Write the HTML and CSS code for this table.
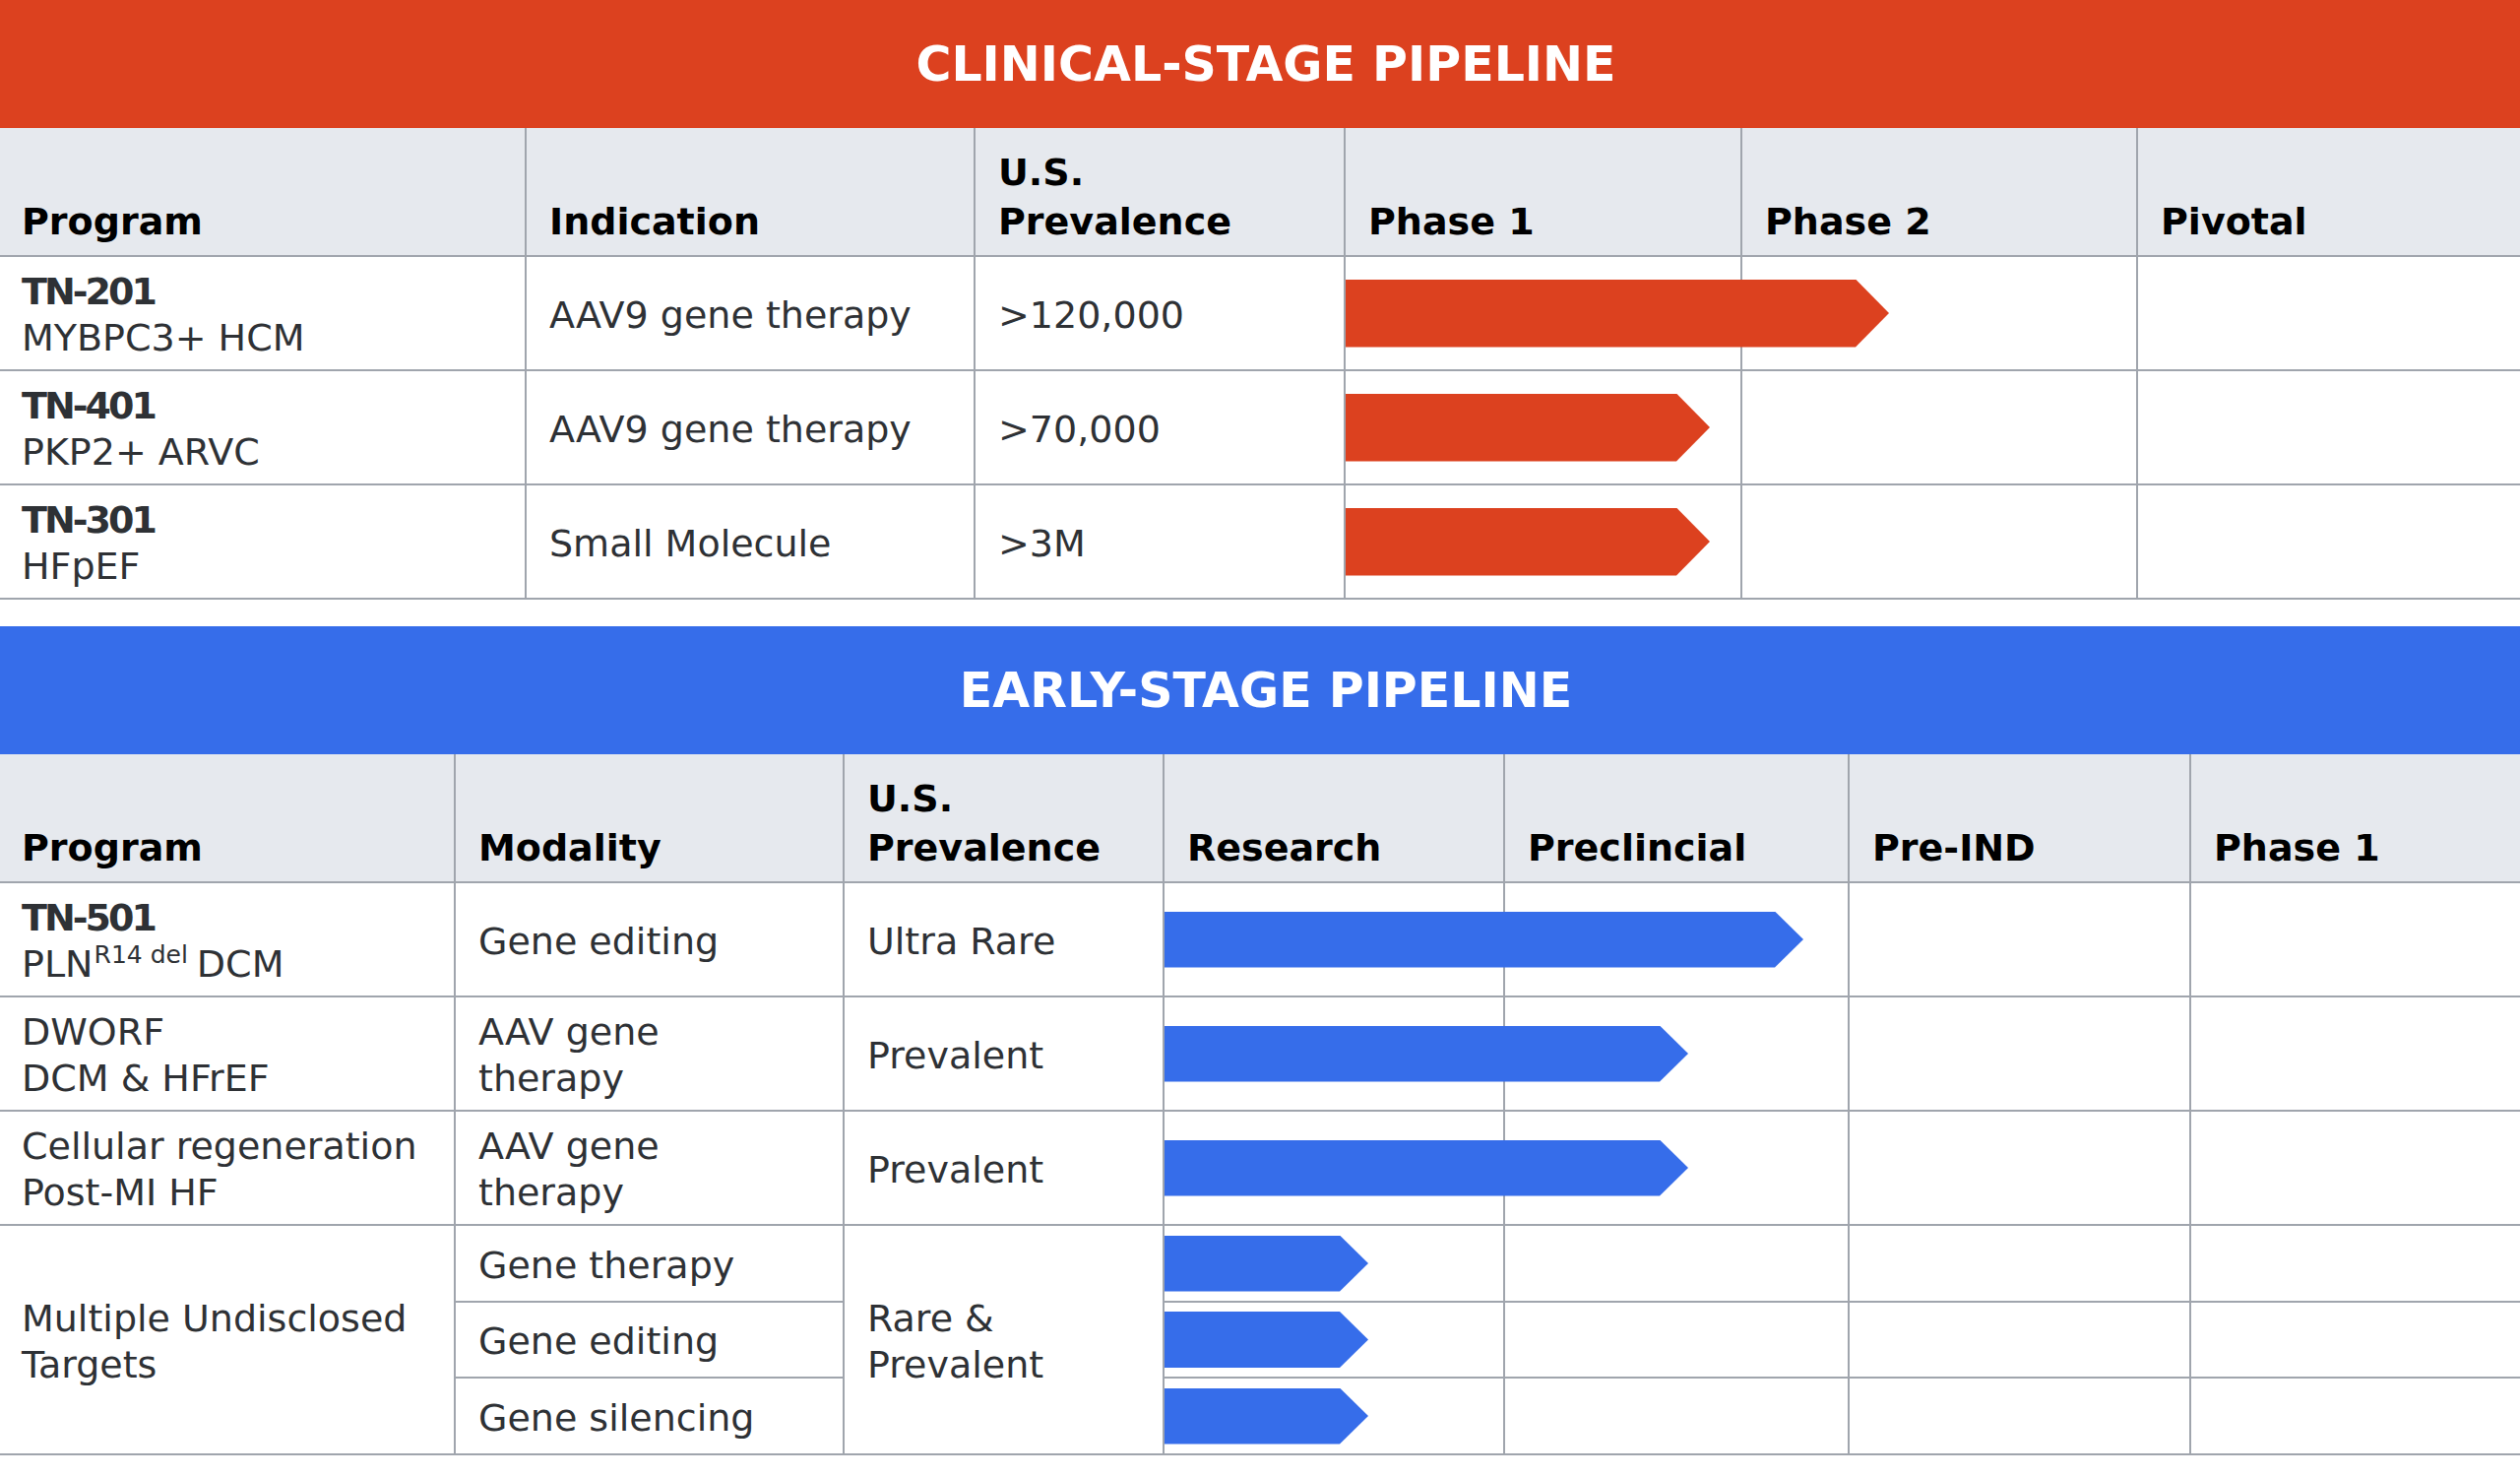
FILE: index.html
```html
<!DOCTYPE html>
<html lang="en">
<head>
<meta charset="utf-8">
<title>Pipeline</title>
<link rel="stylesheet" href="styles.css">
</head>
<body>
<main class="page">
  <section class="pipeline">
    <h2 class="band band-red">CLINICAL-STAGE PIPELINE</h2>
    <div class="grid grid-clinical">
      <div class="cell th first">Program</div>
      <div class="cell th">Indication</div>
      <div class="cell th">U.S.<br>Prevalence</div>
      <div class="cell th">Phase 1</div>
      <div class="cell th">Phase 2</div>
      <div class="cell th">Pivotal</div>

      <div class="cell td first"><div><b class="pid">TN-201</b><br>MYBPC3+ HCM</div></div>
      <div class="cell td">AAV9 gene therapy</div>
      <div class="cell td">&gt;120,000</div>
      <div class="cell ph"><span class="bar bar-red" style="width:552px"></span></div>
      <div class="cell ph"></div>
      <div class="cell ph"></div>

      <div class="cell td first"><div><b class="pid">TN-401</b><br>PKP2+ ARVC</div></div>
      <div class="cell td">AAV9 gene therapy</div>
      <div class="cell td">&gt;70,000</div>
      <div class="cell ph"><span class="bar bar-red" style="width:370px"></span></div>
      <div class="cell ph"></div>
      <div class="cell ph"></div>

      <div class="cell td first"><div><b class="pid">TN-301</b><br>HFpEF</div></div>
      <div class="cell td">Small Molecule</div>
      <div class="cell td">&gt;3M</div>
      <div class="cell ph"><span class="bar bar-red" style="width:370px"></span></div>
      <div class="cell ph"></div>
      <div class="cell ph"></div>
    </div>
  </section>

  <section class="pipeline early">
    <h2 class="band band-blue">EARLY-STAGE PIPELINE</h2>
    <div class="grid grid-early">
      <div class="cell th first">Program</div>
      <div class="cell th">Modality</div>
      <div class="cell th">U.S.<br>Prevalence</div>
      <div class="cell th">Research</div>
      <div class="cell th">Preclincial</div>
      <div class="cell th">Pre-IND</div>
      <div class="cell th">Phase 1</div>

      <div class="cell td first"><div><b class="pid">TN-501</b><br>PLN<sup>R14 del</sup>DCM</div></div>
      <div class="cell td">Gene editing</div>
      <div class="cell td">Ultra Rare</div>
      <div class="cell ph"><span class="bar bar-blue" style="width:649px"></span></div>
      <div class="cell ph"></div>
      <div class="cell ph"></div>
      <div class="cell ph"></div>

      <div class="cell td first"><div>DWORF<br>DCM &amp; HFrEF</div></div>
      <div class="cell td"><div>AAV gene<br>therapy</div></div>
      <div class="cell td">Prevalent</div>
      <div class="cell ph"><span class="bar bar-blue" style="width:532px"></span></div>
      <div class="cell ph"></div>
      <div class="cell ph"></div>
      <div class="cell ph"></div>

      <div class="cell td first"><div>Cellular regeneration<br>Post-MI HF</div></div>
      <div class="cell td"><div>AAV gene<br>therapy</div></div>
      <div class="cell td">Prevalent</div>
      <div class="cell ph"><span class="bar bar-blue" style="width:532px"></span></div>
      <div class="cell ph"></div>
      <div class="cell ph"></div>
      <div class="cell ph"></div>

      <div class="cell td first span3"><div>Multiple Undisclosed<br>Targets</div></div>
      <div class="cell td">Gene therapy</div>
      <div class="cell td span3"><div>Rare &amp;<br>Prevalent</div></div>
      <div class="cell ph"><span class="bar bar-blue" style="width:207px"></span></div>
      <div class="cell ph"></div>
      <div class="cell ph"></div>
      <div class="cell ph"></div>

      <div class="cell td">Gene editing</div>
      <div class="cell ph"><span class="bar bar-blue" style="width:207px"></span></div>
      <div class="cell ph"></div>
      <div class="cell ph"></div>
      <div class="cell ph"></div>

      <div class="cell td">Gene silencing</div>
      <div class="cell ph"><span class="bar bar-blue" style="width:207px"></span></div>
      <div class="cell ph"></div>
      <div class="cell ph"></div>
      <div class="cell ph"></div>
    </div>
  </section>
</main>
</body>
</html>
```
FILE: styles.css
```css
* { box-sizing: border-box; }

html, body {
  margin: 0;
  padding: 0;
  background: #ffffff;
}

body {
  font-family: "DejaVu Sans", "Liberation Sans", sans-serif;
  color: #2e3135;
}

.page {
  width: 2560px;
  display: flex;
  flex-direction: column;
  gap: 27px;
}

.band {
  margin: 0;
  height: 130px;
  display: flex;
  align-items: center;
  justify-content: center;
  padding-left: 12px;
  font-size: 49px;
  font-weight: 700;
  line-height: 1;
  color: #ffffff;
}

.band-red { background: #dc411f; }
.band-blue { background: #366dea; }

.grid {
  display: grid;
}

.grid-clinical {
  grid-template-columns: 533px 456px 376px 403px 402px 390px;
  grid-template-rows: 131px repeat(3, 116px);
}

.grid-early {
  grid-template-columns: 461px 395px 325px 346px 350px 347px 336px;
  grid-template-rows: 131px repeat(3, 116px) 78px 77px 78px;
}

.cell {
  border-bottom: 2px solid #a0a5ad;
  border-left: 2px solid #a0a5ad;
  padding-left: 23px;
  font-size: 38px;
}

.cell.first {
  border-left: none;
  padding-left: 22px;
}

.th {
  background: #e6e9ee;
  color: #000000;
  font-weight: 700;
  line-height: 50px;
  display: flex;
  align-items: flex-end;
  padding-bottom: 9px;
}

.td {
  line-height: 47px;
  display: flex;
  align-items: center;
  padding-top: 4px;
  background: #ffffff;
}

.pid {
  font-weight: 700;
  letter-spacing: -3px;
}

sup {
  font-size: 25px;
  line-height: 0;
  vertical-align: 14px;
  margin-left: 1px;
  margin-right: 9px;
}

.span3 {
  grid-row: span 3;
}

.ph {
  padding-left: 0;
  display: flex;
  align-items: center;
  background: transparent;
}

.bar {
  position: relative;
  z-index: 1;
  flex: none;
  display: block;
}

.bar-red {
  height: 69px;
  background: #dc411f;
  clip-path: polygon(0 0, calc(100% - 34px) 0, 100% 50%, calc(100% - 34px) 100%, 0 100%);
}

.bar-blue {
  height: 57px;
  background: #366dea;
  clip-path: polygon(0 0, calc(100% - 29px) 0, 100% 50%, calc(100% - 29px) 100%, 0 100%);
}
```
